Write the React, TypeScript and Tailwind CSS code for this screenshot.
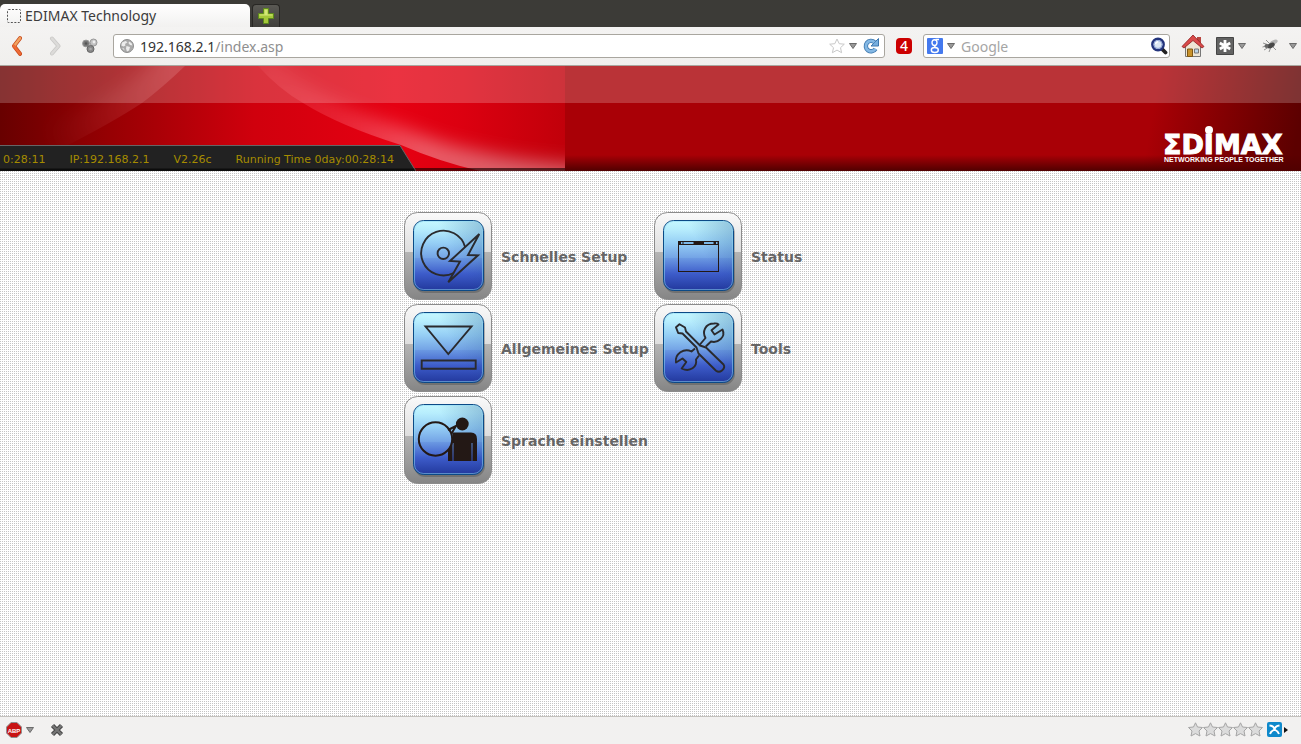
import type { ReactNode } from "react";

const menuItems = [
  { label: "Schnelles Setup", icon: "disc" },
  { label: "Status", icon: "window" },
  { label: "Allgemeines Setup", icon: "arrow" },
  { label: "Tools", icon: "tools" },
  { label: "Sprache einstellen", icon: "person" },
];

const glyphs: Record<string, ReactNode> = {
  disc: (
    <g fill="none" stroke="#2a2a2e" strokeWidth="1.9">
      <path d="M61.2 35.2A22.4 22.4 0 1 0 49.8 61" />
      <circle cx="39.3" cy="41.3" r="5.7" />
      <path d="M75.3 22L64 43L74 43.3L44.3 70.3L56 49.5L46 49Z" />
    </g>
  ),
  window: (
    <g>
      <rect x="24.5" y="29.5" width="40" height="30" fill="none" stroke="#231815" />
      <path d="M24 29h41v4H24z" fill="#231815" />
      <path d="M27 30h1.5v2H27zM29.5 30h10v2h-10zM50 30h9.5v2H50zM62 30h1.5v2H62z" fill="#7cb8e8" />
    </g>
  ),
  arrow: (
    <g fill="none" stroke="#2a2a2e" strokeWidth="1.9">
      <path d="M21.5 22.5H67.5L44.3 50Z" />
      <path d="M17.7 56.5h54v8.3h-54z" />
    </g>
  ),
  tools: (
    <g fill="none" stroke="#2a2a2e" strokeWidth="1.9" strokeLinejoin="round">
      <path d="M25.5 20.2L22 23.3L24.2 29L28.5 29.5L42.5 43.5L44.5 49.5L62 66.8Q65 69 68 66.5Q71.5 63.5 69.5 60.5L52 43.5L46 41.5L32 27.5L31 23.5Z" />
      <path d="M45.5 41L51.5 34C48 28 51 19.5 60 19.5Q63 19 64.5 20.5L57.5 26.3L60.5 30.5L68.5 25.5C72 33 64 39.5 57 37.5L51.8 42.5" />
      <path d="M41 44.5L37.5 47.5C30 43.5 20.5 50 22 58.5L28.5 54.5L32.3 58L27.7 64.5C36 68.5 43.5 63 42 55.5L45 51.5" />
    </g>
  ),
  person: (
    <g>
      <circle cx="31.5" cy="43" r="16.7" fill="none" stroke="#231815" strokeWidth="2" />
      <path d="M44 34L52 30L47.5 37.5" fill="none" stroke="#231815" strokeWidth="2" />
      <circle cx="58.3" cy="28" r="6.4" fill="#231815" />
      <path d="M48.5 36.5H67Q73 36.5 73 43V65H68.5V47H67.5V65H49.5V47H48.5V65H44V53.5Q48.5 50 48.5 43Z" fill="#231815" />
    </g>
  ),
};

const MenuIcon = ({ name }: { name: string }) => (
  <svg className="h-[88px] w-[88px] shrink-0" viewBox="0 0 88 88" aria-hidden="true">
    <defs>
      <linearGradient id={`frame-${name}`} x1="0" y1="0" x2="0" y2="1">
        <stop offset="0" stopColor="#fafafa" />
        <stop offset="0.45" stopColor="#dedede" />
        <stop offset="0.455" stopColor="#b4b4b4" />
        <stop offset="1" stopColor="#858585" />
      </linearGradient>
      <linearGradient id={`face-${name}`} x1="0" y1="0" x2="0" y2="1">
        <stop offset="0" stopColor="#c6f8ff" />
        <stop offset="0.12" stopColor="#b8eefd" />
        <stop offset="0.32" stopColor="#96cff5" />
        <stop offset="0.53" stopColor="#74a4e6" />
        <stop offset="0.54" stopColor="#6a98e2" />
        <stop offset="0.76" stopColor="#3d5cca" />
        <stop offset="1" stopColor="#22389c" />
      </linearGradient>
      <linearGradient id={`shade-${name}`} x1="0.45" y1="0.5" x2="1" y2="0.2">
        <stop offset="0.2" stopColor="#1c4c88" stopOpacity="0" />
        <stop offset="1" stopColor="#1c4c88" stopOpacity="0.25" />
      </linearGradient>
    </defs>
    <rect x="0.5" y="0.5" width="87" height="87" rx="13" fill={`url(#frame-${name})`} stroke="#8b8b8b" />
    <rect x="10" y="10" width="71" height="71" rx="11" fill="#333" opacity="0.3" />
    <rect x="9.5" y="8.5" width="70" height="70" rx="10" fill={`url(#face-${name})`} />
    <rect x="9.5" y="8.5" width="70" height="70" rx="10" fill={`url(#shade-${name})`} stroke="#0c4a86" />
    <rect x="10.5" y="9.5" width="68" height="68" rx="9" fill="none" stroke="#8fdcf5" opacity="0.5" />
    {glyphs[name]}
  </svg>
);

const Caret = () => (
  <svg className="h-[6px] w-[8px] shrink-0" viewBox="0 0 8 6" aria-hidden="true">
    <path d="M0.5 0.5h7L4 5.5z" fill="#999" stroke="#6b6b6b" />
  </svg>
);

const TabBar = () => (
  <div className="flex h-[27px] items-end bg-[#3c3b37]">
    <button className="flex h-[23px] w-[250px] items-center gap-1 rounded-t-[5px] bg-linear-to-b from-white to-[#f2f1f0] pl-[7px] text-left text-[#3c3c3c]">
      <svg className="h-[14px] w-[14px]" viewBox="0 0 14 14" aria-hidden="true">
        <rect x="0.5" y="0.5" width="13" height="13" rx="1" fill="none" stroke="#555" strokeDasharray="2 1.5" />
      </svg>
      <span className="text-[14px] leading-5">EDIMAX Technology</span>
    </button>
    <button aria-label="Neuer Tab" className="ml-0.5 flex h-[23px] w-7 items-center justify-center rounded-t-[4px] border border-b-0 border-[#282724] bg-linear-to-b from-[#5a5954] to-[#403f3b]">
      <svg className="h-4 w-4" viewBox="0 0 16 16" aria-hidden="true">
        <path d="M5.5 0.5h5v5h5v5h-5v5h-5v-5h-5v-5h5z" fill="#a5c83a" stroke="#5d8a1c" />
        <path d="M6.5 1.5h3v5h5v1h-13v-1h5z" fill="#d3e778" />
      </svg>
    </button>
  </div>
);

const Toolbar = () => (
  <div className="flex h-[39px] items-center border-b border-[#a9a79f] bg-linear-to-b from-[#f4f3f2] to-[#f0efed] pr-1">
    <button aria-label="Zurück" className="ml-[11px]">
      <svg className="h-5 w-[11px]" viewBox="0 0 11 20" aria-hidden="true">
        <path d="M9 2.2L3 10L9 17.8" fill="none" stroke="#c8481a" strokeWidth="4" strokeLinecap="round" strokeLinejoin="round" />
        <path d="M9 2.2L3 10" fill="none" stroke="#f2a360" strokeWidth="2.6" strokeLinecap="round" />
        <path d="M3 10L9 17.8" fill="none" stroke="#ee6b35" strokeWidth="2.6" strokeLinecap="round" />
      </svg>
    </button>
    <button aria-label="Vor" className="ml-[27px]">
      <svg className="h-5 w-[13px]" viewBox="0 0 13 20" aria-hidden="true">
        <path d="M3 2.5L9.5 10L3 17.5" fill="none" stroke="#c9c8c6" strokeWidth="4" strokeLinecap="round" strokeLinejoin="round" />
        <path d="M3 2.5L9.5 10L3 17.5" fill="none" stroke="#dcdbd9" strokeWidth="2.5" strokeLinecap="round" strokeLinejoin="round" />
      </svg>
    </button>
    <button aria-label="Erweiterung" className="ml-5">
      <svg className="h-4 w-4" viewBox="0 0 16 16" aria-hidden="true">
        <circle cx="4" cy="5.5" r="3.4" fill="#777" stroke="#999" />
        <circle cx="11.5" cy="4.5" r="3.5" fill="#c2c2c2" stroke="#999" />
        <circle cx="8.5" cy="11" r="3.5" fill="#888" stroke="#666" />
        <circle cx="4" cy="5.5" r="1.2" fill="#555" />
        <circle cx="12" cy="4" r="1.4" fill="#eee" />
        <circle cx="8.5" cy="11" r="1.3" fill="#aaa" />
      </svg>
    </button>
    <div className="ml-[15px] flex h-6 flex-1 items-center rounded-[3px] border border-[#a9a69f] bg-white pr-[5px] pl-1.5">
      <svg className="h-[14px] w-[14px] shrink-0" viewBox="0 0 14 14" aria-hidden="true">
        <circle cx="7" cy="7" r="6.5" fill="#aaa" stroke="#8e8e8e" />
        <path d="M2 3.5L5.5 2L7.5 3.2L5 5L5.5 6.5L3.5 7.5L1.3 6.5ZM9 2.5L11.5 4L12.5 6.5L10 6L8.5 4.2ZM6.5 7L10 8L9 11.5L7 12.5L6 9.5ZM2 9L4 9.5L4.5 11.5Z" fill="#ececec" />
      </svg>
      {/* The path is greyed, so the address is a focusable text rather than one flat input value */}
      <div role="textbox" aria-label="Adresse" tabIndex={0} className="ml-1.5 flex-1 pt-0.5 text-[14px] leading-5 text-[#333]">
        192.168.2.1<span className="text-[#8f8f8f]">/index.asp</span>
      </div>
      <button aria-label="Lesezeichen">
        <svg className="h-4 w-4" viewBox="0 0 16 16" aria-hidden="true">
          <path d="M8 1L10.2 5.7L15.3 6.2L11.5 9.7L12.6 14.7L8 12.1L3.4 14.7L4.5 9.7L0.7 6.2L5.8 5.7Z" fill="#fff" stroke="#c8c8c8" />
        </svg>
      </button>
      <button aria-label="Verlauf" className="ml-1"><Caret /></button>
      <button aria-label="Neu laden" className="ml-1.5">
        <svg className="h-4 w-4" viewBox="0 0 16 16" aria-hidden="true">
          <path d="M11.5 4.2A5.2 5.2 0 1 0 12.5 10.8" fill="none" stroke="#3d77ae" strokeWidth="4.4" />
          <path d="M15.5 0.5V8H8Z" fill="#76aede" stroke="#3d77ae" />
          <path d="M11.5 4.2A5.2 5.2 0 1 0 12.5 10.8" fill="none" stroke="#84b8e4" strokeWidth="2.8" />
        </svg>
      </button>
    </div>
    <button className="ml-[11px] h-4 w-4 rounded-[4px] bg-[#cc0000] text-[14px] leading-4 font-medium text-white">4</button>
    <div className="ml-[11px] flex h-6 w-[247px] items-center rounded-[3px] border border-[#a9a69f] bg-white pr-px pl-[3px]">
      <button className="flex items-center gap-1" aria-label="Suchmaschine">
        <svg className="h-4 w-4" viewBox="0 0 16 16" aria-hidden="true">
          <rect width="16" height="16" rx="1" fill="#4479ee" />
          <g fill="none" stroke="#fff" strokeWidth="1.4">
            <ellipse cx="7.5" cy="4.6" rx="2.5" ry="2.9" />
            <path d="M8.5 1.5H12M8.5 7.5Q6.5 8.8 9.5 9.8" />
            <ellipse cx="7.8" cy="12" rx="3.5" ry="2.5" />
          </g>
        </svg>
        <Caret />
      </button>
      <input aria-label="Suche" placeholder="Google" className="ml-1.5 min-w-0 flex-1 pt-0.5 text-[14px] leading-5 outline-none placeholder:text-[#a5a5a5]" />
      <button aria-label="Suchen">
        <svg className="h-[18px] w-[18px]" viewBox="0 0 18 18" aria-hidden="true">
          <path d="M11.5 11.5L15.5 15.5" stroke="#222" strokeWidth="3.8" strokeLinecap="round" />
          <circle cx="8" cy="7.5" r="5.7" fill="#dce7f3" stroke="#23347c" strokeWidth="2.4" />
          <circle cx="8" cy="7.5" r="4" fill="none" stroke="#8fa6d8" />
          <path d="M5.5 7Q6 5 8 4.8" stroke="#fff" strokeWidth="1.5" fill="none" />
        </svg>
      </button>
    </div>
    <button aria-label="Startseite" className="ml-[11px]">
      <svg className="h-6 w-6" viewBox="0 0 24 24" aria-hidden="true">
        <path d="M16 3h4v6h-4z" fill="#b9453f" />
        <path d="M4.5 12L12 5L19.5 12V22.5H4.5Z" fill="#eee6d4" stroke="#777" />
        <path d="M6.5 15h5v7.5h-5z" fill="#c8922a" stroke="#7d5714" />
        <path d="M13.5 15h4v4h-4z" fill="#b9d4e8" stroke="#777" />
        <path d="M1 12.5L12 1L23 12.5L21 14L12 6.5L3 14Z" fill="#d94a4a" stroke="#8e2020" strokeWidth="0.8" />
      </svg>
    </button>
    <button aria-label="Add-ons" className="ml-[11px] flex items-center gap-1">
      <svg className="h-[18px] w-[18px]" viewBox="0 0 18 18" aria-hidden="true">
        <path d="M0.5 0.5h17v17h-17z" fill="#626262" stroke="#454545" />
        <path d="M9 3v12M3.8 6L14.2 12M14.2 6L3.8 12" stroke="#fff" strokeWidth="2.8" />
      </svg>
      <Caret />
    </button>
    <button aria-label="Firebug" className="ml-4 flex items-center gap-[11px]">
      <svg className="h-4 w-4" viewBox="0 0 16 16" aria-hidden="true">
        <path d="M1 5L7 7M2 12L7 9M7 14L9 9M14 12L10 8M4 2L8 6M0.5 9L4 8" stroke="#8a8a8a" strokeWidth="0.9" />
        <ellipse cx="11.5" cy="4.5" rx="4.5" ry="2.2" fill="#b5b5b5" transform="rotate(-25 11.5 4.5)" />
        <ellipse cx="9" cy="7.5" rx="4" ry="2.4" fill="#484848" transform="rotate(-25 9 7.5)" />
        <circle cx="4.5" cy="8" r="2" fill="#666" />
      </svg>
      <Caret />
    </button>
  </div>
);

const HeaderArt = () => (
  <svg className="absolute top-0 left-0 h-[105px] w-[565px]" viewBox="0 0 565 105" aria-hidden="true">
    <defs>
      <linearGradient id="art-base" x1="0" y1="0" x2="1" y2="0">
        <stop offset="0" stopColor="#680000" />
        <stop offset="0.2" stopColor="#980003" />
        <stop offset="0.45" stopColor="#d0000d" />
        <stop offset="0.7" stopColor="#e60012" />
        <stop offset="0.82" stopColor="#dc0010" />
        <stop offset="1" stopColor="#c1000a" />
      </linearGradient>
      <linearGradient id="art-left" gradientUnits="userSpaceOnUse" x1="70" y1="80" x2="185" y2="0">
        <stop offset="0" stopColor="#ffc0c0" stopOpacity="0.02" />
        <stop offset="1" stopColor="#ffc0c0" stopOpacity="0.2" />
      </linearGradient>
      <linearGradient id="art-glow" gradientUnits="userSpaceOnUse" x1="250" y1="0" x2="500" y2="0">
        <stop offset="0" stopColor="#ff5060" stopOpacity="0.15" />
        <stop offset="0.4" stopColor="#ff7080" stopOpacity="0.35" />
        <stop offset="0.7" stopColor="#f08088" stopOpacity="0.7" />
        <stop offset="1" stopColor="#dc8088" stopOpacity="0.75" />
      </linearGradient>
      <filter id="art-blur" x="-20%" y="-40%" width="140%" height="180%">
        <feGaussianBlur stdDeviation="9" />
      </filter>
      <clipPath id="clip-left">
        <path d="M185 0Q162 22 142 37Q110 58 60 83L0 105V0Z" />
      </clipPath>
      <clipPath id="clip-right">
        <path d="M258 0Q280 24 303 37Q340 60 401 79Q440 96 480 105H565V0Z" />
      </clipPath>
    </defs>
    <path fill="url(#art-base)" d="M0 0h565v105H0z" />
    <g clipPath="url(#clip-left)">
      <path d="M190 -5Q162 22 142 37Q110 58 60 83" fill="none" stroke="url(#art-left)" strokeWidth="50" filter="url(#art-blur)" />
    </g>
    <g clipPath="url(#clip-right)">
      <path d="M258 0Q280 24 303 37Q340 60 401 79Q440 96 480 103Q530 114 620 118" fill="none" stroke="url(#art-glow)" strokeWidth="34" filter="url(#art-blur)" />
    </g>
    <path d="M0 102h565v3H0z" fill="#1a0000" opacity="0.65" />
  </svg>
);

const Logo = () => (
  <svg className="absolute right-3 bottom-[7px] h-[38px] w-[126px]" viewBox="0 0 126 38" role="img" aria-label="EDIMAX">
    <g fill="#fff">
      <circle cx="46" cy="4" r="4" />
      <text fontWeight="700">
        <tspan x="0" y="28" fontSize="27" fontFamily="DejaVu Sans" stroke="#fff">ΣDIMAX</tspan>
        <tspan x="1" y="36" fontSize="7" fontFamily="Liberation Sans">NETWORKING PEOPLE TOGETHER</tspan>
      </text>
    </g>
  </svg>
);

const Header = () => (
  <header className="relative h-[105px] overflow-hidden bg-[#a90006]">
    <div className="absolute inset-y-0 right-0 w-[180px] bg-linear-100 from-[#a90006] from-20% to-[#5c0000] to-95%" />
    <div className="absolute inset-x-0 bottom-0 h-4 bg-linear-to-b from-transparent to-[#500000]" />
    <HeaderArt />
    <div className="absolute inset-x-0 top-0 h-[37px] bg-white/20" />
    <Logo />
    <div className="absolute bottom-0 left-0 h-[26px] w-[418px]">
      <svg className="absolute inset-0 h-[26px] w-[418px]" viewBox="0 0 418 26" aria-hidden="true">
        <path d="M0 0.5H400L415.5 25.5H0Z" fill="#222" />
        <path d="M0 0.5H400L415.5 25.5" fill="none" stroke="#666" />
        <path d="M0 23.5H414L415 26H0Z" fill="#0c0c0c" />
      </svg>
      <div className="relative flex gap-6 pt-2 pl-[3px] font-['DejaVu_Sans',sans-serif] text-[11px] leading-[14px] whitespace-nowrap text-[#a68c00]">
        <span>0:28:11</span>
        <span>IP:192.168.2.1</span>
        <span>V2.26c</span>
        <span>Running Time 0day:00:28:14</span>
      </div>
    </div>
  </header>
);

const StatusBar = () => (
  <footer className="flex h-7 items-center border-t border-[#c3c1bd] bg-[#f2f1f0] px-1.5 pb-0.5">
    <button aria-label="Adblock Plus" className="flex items-center gap-1">
      <svg className="h-4 w-4" viewBox="0 0 16 16" aria-hidden="true">
        <path d="M5 0.5h6L15.5 5v6L11 15.5H5L0.5 11V5z" fill="#c81414" stroke="#8e8e8e" />
        <text x="8" y="10.5" textAnchor="middle" fontSize="6" fontWeight="700" fontFamily="Liberation Sans" fill="#fff">ABP</text>
      </svg>
      <Caret />
    </button>
    <button aria-label="Schließen" className="ml-4">
      <svg className="h-[14px] w-[14px]" viewBox="0 0 14 14" aria-hidden="true">
        <path d="M2.5 2.5L11.5 11.5M11.5 2.5L2.5 11.5" stroke="#444" strokeWidth="4.4" />
        <path d="M2.5 2.5L11.5 11.5M11.5 2.5L2.5 11.5" stroke="#757575" strokeWidth="2.4" />
      </svg>
    </button>
    <div className="ml-auto flex">
      {[1, 2, 3, 4, 5].map((star) => (
        <button key={star} aria-label={`${star} Sterne`} className="w-[15px]">
          <svg className="h-[15px] w-[15px]" viewBox="0 0 15 15" aria-hidden="true">
            <path d="M7.5 0.8L9.5 5L14.5 5.5L11 9L12 14L7.5 11.6L3 14L4 9L0.5 5.5L5.5 5Z" fill="#dcdcdc" stroke="#a5a5a5" />
          </svg>
        </button>
      ))}
    </div>
    <button aria-label="WOT" className="ml-1 flex items-center gap-0.5 pr-[7px]">
      <svg className="h-[15px] w-[15px]" viewBox="0 0 15 15" aria-hidden="true">
        <rect width="15" height="15" rx="2" fill="#0f89cb" />
        <path d="M2.5 3.5Q7 4 7.5 7.5Q8 4 12.5 3.5M3 12Q4 9 7.5 7.5Q11 9 12 12" fill="none" stroke="#fff" strokeWidth="1.9" />
      </svg>
      <svg className="h-[6px] w-[4px]" viewBox="0 0 4 6" aria-hidden="true">
        <path d="M0 0L4 3L0 6z" fill="#111" />
      </svg>
    </button>
  </footer>
);

const App = () => {
  return (
    <div className="flex min-h-screen flex-col font-['Noto_Sans',sans-serif]">
      <TabBar />
      <Toolbar />
      <Header />
      <main className="flex-1 bg-[conic-gradient(#fff_75%,#c4c4c4_0)] bg-size-[2px_2px] pt-[41px]">
        <nav className="mx-auto grid w-[501px] grid-cols-[250px_250px] gap-y-1 pl-1">
          {menuItems.map((item) => (
            <a
              key={item.label}
              href="#"
              className="flex items-center gap-[9px] font-['DejaVu_Sans',sans-serif] text-[14px] leading-5 font-bold whitespace-nowrap text-[#666]"
            >
              <MenuIcon name={item.icon} />
              <span className="pt-0.5">{item.label}</span>
            </a>
          ))}
        </nav>
      </main>
      <StatusBar />
    </div>
  );
};

export default App;
